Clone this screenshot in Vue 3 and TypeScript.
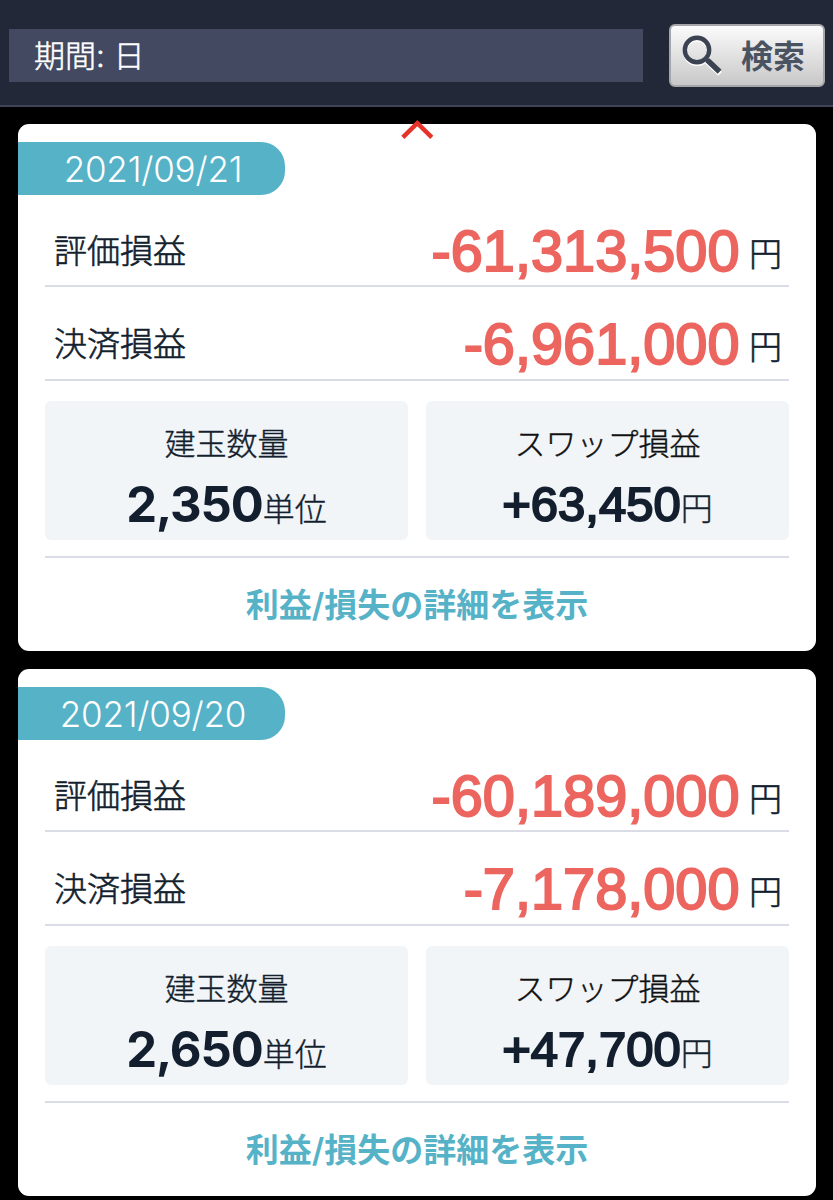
<script setup lang="ts">
interface DailyReport {
  date: string
  valuation: string
  settlement: string
  quantity: string
  swap: string
}

const reports: DailyReport[] = [
  { date: '2021/09/21', valuation: '-61,313,500', settlement: '-6,961,000', quantity: '2,350', swap: '+63,450' },
  { date: '2021/09/20', valuation: '-60,189,000', settlement: '-7,178,000', quantity: '2,650', swap: '+47,700' },
]
</script>

<template>
  <div class="screen">
    <header class="toolbar">
      <div class="period">期間: 日</div>
      <button class="search" type="button">
        <svg class="lens" width="42" height="42" viewBox="0 0 42 42" fill="none">
          <g stroke="#ffffff" transform="translate(0 1.6)">
            <circle cx="16" cy="16" r="12.2" stroke-width="4.4" />
            <path d="M26 26L39 38.3" stroke-width="5.4" />
          </g>
          <g stroke="#3b4251">
            <circle cx="16" cy="16" r="12.2" stroke-width="4.4" />
            <path d="M24 24L28 28" stroke-width="4" />
            <path d="M26.5 26.3L38.6 37.8" stroke-width="5.6" />
          </g>
        </svg>
        <span class="search-text">検索</span>
      </button>
    </header>

    <main class="list">
      <svg class="chevron" width="33" height="20" viewBox="0 0 33 20" fill="none">
        <path d="M1.8 17.4L16.3 3.2L30.8 17.4" stroke="#e6332a" stroke-width="4.4" />
      </svg>
      <article v-for="r in reports" :key="r.date" class="card">
        <div class="ribbon">{{ r.date }}</div>
        <div class="body">
          <div class="row first">
            <span class="label">評価損益</span>
            <span class="amount">{{ r.valuation }}</span>
            <span class="yen">円</span>
          </div>
          <div class="row second">
            <span class="label">決済損益</span>
            <span class="amount">{{ r.settlement }}</span>
            <span class="yen">円</span>
          </div>
          <div class="boxes">
            <section class="box">
              <div class="caption">建玉数量</div>
              <div class="value"><span class="quantity">{{ r.quantity }}</span><span class="unit">単位</span></div>
            </section>
            <section class="box">
              <div class="caption dark">スワップ損益</div>
              <div class="value"><span class="swap">{{ r.swap }}</span><span class="unit">円</span></div>
            </section>
          </div>
          <div class="detail">利益/損失の詳細を表示</div>
        </div>
      </article>
    </main>
  </div>
</template>

<style>
body {
  background: #000;
}
</style>

<style scoped>
.screen {
  width: 833px;
  height: 1200px;
  overflow: hidden;
  background: #000;
  color: #131f2e;
  font-family: Inter, "Noto Sans CJK JP", sans-serif;
  font-weight: 300;
  white-space: nowrap;
}
.toolbar {
  box-sizing: border-box;
  height: 107px;
  padding: 24px 8px 0 9px;
  display: flex;
  justify-content: space-between;
  background: #222838;
  border-bottom: 2px solid #3e4556;
}
.period {
  box-sizing: border-box;
  width: 634px;
  height: 53px;
  margin-top: 5px;
  padding-left: 25px;
  background: #434961;
  color: #fff;
  font-size: 31px;
  line-height: 54px;
  -webkit-text-stroke: 0.5px currentColor;
}
.search {
  box-sizing: border-box;
  width: 156px;
  height: 63px;
  padding: 0 0 0 10px;
  display: flex;
  align-items: flex-start;
  border: 2px solid #a5a6aa;
  border-radius: 6px;
  background: linear-gradient(#fbfbfb, #c9c8c9);
  color: #4a5362;
  font-family: "Noto Sans CJK JP", sans-serif;
  font-size: 32px;
  font-weight: 700;
}
.lens {
  flex: none;
  margin-top: 8px;
}
.search-text {
  margin-left: 18px;
  line-height: 57px;
}
.list {
  position: relative;
  padding: 17.3px 17px 0 18px;
  display: flex;
  flex-direction: column;
  gap: 18px;
}
.chevron {
  position: absolute;
  left: 401px;
  top: 13px;
}
.card {
  box-sizing: border-box;
  height: 527px;
  padding-top: 17.7px;
  border-radius: 11px;
  background: #fff;
}
.ribbon {
  box-sizing: border-box;
  width: 267px;
  height: 53px;
  padding-left: 3px;
  border-radius: 0 24px 24px 0;
  background: #55b2c7;
  color: #fff;
  font-size: 35px;
  font-weight: 350;
  letter-spacing: -0.2px;
  line-height: 54px;
  text-align: center;
}
.body {
  padding: 0 27px;
}
.row {
  box-sizing: border-box;
  display: flex;
  align-items: flex-start;
  padding-left: 9px;
  padding-right: 7px;
  border-bottom: 2px solid #dadde5;
}
.first {
  height: 92px;
  padding-top: 27px;
}
.second {
  height: 94px;
  padding-top: 28px;
}
.label {
  flex: 1;
  font-size: 33px;
  line-height: 58px;
  -webkit-text-stroke: 0.6px currentColor;
}
.amount {
  color: #ec655f;
  font-family: "Liberation Sans", Arial, sans-serif;
  font-size: 57.7px;
  font-weight: 400;
  line-height: 58px;
  -webkit-text-stroke: 2px #ec655f;
}
.yen {
  margin-left: 9.5px;
  font-size: 33px;
  line-height: 64px;
  -webkit-text-stroke: 0.6px currentColor;
}
.boxes {
  display: grid;
  grid-template-columns: 1fr 1fr;
  gap: 18px;
  margin-top: 20px;
}
.box {
  height: 139px;
  border-radius: 6px;
  background: #f2f5f8;
  text-align: center;
}
.caption {
  padding-top: 20.5px;
  font-size: 31px;
  line-height: 46px;
  -webkit-text-stroke: 0.4px currentColor;
}
.dark {
  color: #111;
}
.value {
  line-height: 75px;
}
.quantity {
  font-size: 49px;
  font-weight: 700;
  letter-spacing: -1.1px;
}
.swap {
  font-family: "Liberation Sans", Arial, sans-serif;
  font-size: 49px;
  font-weight: 400;
  -webkit-text-stroke: 2px #131f2e;
}
.unit {
  font-size: 32px;
  line-height: 1;
  vertical-align: 1px;
  -webkit-text-stroke: 0.4px currentColor;
}
.detail {
  margin-top: 16px;
  border-top: 2px solid #dadde5;
  color: #55b2c7;
  font-size: 33px;
  font-weight: 600;
  line-height: 95px;
  text-align: center;
}
</style>
